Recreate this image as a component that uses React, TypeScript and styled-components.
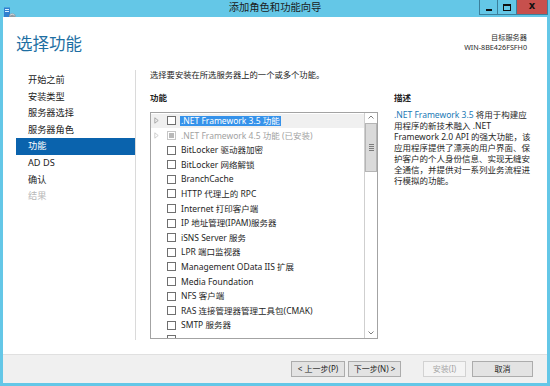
import React from 'react';
import styled, { createGlobalStyle } from 'styled-components';

const FONT = `"Noto Sans", "Noto Sans CJK SC", sans-serif`;

type NavState = 'normal' | 'current' | 'disabled';
type BoxState = 'empty' | 'installed';

interface Feature {
  label: string;
  expandable?: boolean;
  selected?: boolean;
  installed?: boolean;
}

const NAV_ITEMS: { label: string; state: NavState }[] = [
  { label: '开始之前', state: 'normal' },
  { label: '安装类型', state: 'normal' },
  { label: '服务器选择', state: 'normal' },
  { label: '服务器角色', state: 'normal' },
  { label: '功能', state: 'current' },
  { label: 'AD DS', state: 'normal' },
  { label: '确认', state: 'normal' },
  { label: '结果', state: 'disabled' },
];

// the last entry is the row cut off by the bottom of the list, only its box shows
const FEATURES: Feature[] = [
  { label: '.NET Framework 3.5 功能', expandable: true, selected: true },
  { label: '.NET Framework 4.5 功能 (已安装)', expandable: true, installed: true },
  { label: 'BitLocker 驱动器加密' },
  { label: 'BitLocker 网络解锁' },
  { label: 'BranchCache' },
  { label: 'HTTP 代理上的 RPC' },
  { label: 'Internet 打印客户端' },
  { label: 'IP 地址管理(IPAM)服务器' },
  { label: 'iSNS Server 服务' },
  { label: 'LPR 端口监视器' },
  { label: 'Management OData IIS 扩展' },
  { label: 'Media Foundation' },
  { label: 'NFS 客户端' },
  { label: 'RAS 连接管理器管理工具包(CMAK)' },
  { label: 'SMTP 服务器' },
  { label: '' },
];

const DESC_LINES = [
  '用程序的新技术融入 .NET',
  'Framework 2.0 API 的强大功能，该',
  '应用程序提供了漂亮的用户界面、保',
  '护客户的个人身份信息、实现无缝安',
  '全通信，并提供对一系列业务流程进',
  '行模拟的功能。',
];

const AppIcon = () => (
  <svg width="13" height="12" viewBox="0 0 13 12">
    <rect x="1" y="0.5" width="6" height="10" fill="#2f7fcf" />
    <rect x="2" y="2" width="4" height="1" fill="#d8ecff" />
    <rect x="2" y="4" width="4" height="1" fill="#d8ecff" />
    <path d="M6 11 L6 8 Q9 4.5 12.5 8 L12.5 11 Z" fill="#8e9aa3" />
    <path d="M7 8.2 Q9 6 11.5 8.2" stroke="#e6eaee" strokeWidth="0.8" fill="none" />
  </svg>
);

const Expander = ({ faded }: { faded?: boolean }) => (
  <svg width="5" height="7" viewBox="0 0 5 7">
    <path d="M0.8 0.8 L4.2 3.5 L0.8 6.2 Z" fill="none" stroke={faded ? '#c4c4c4' : '#9a9a9a'} strokeWidth="0.8" />
  </svg>
);

const Chevron = ({ up }: { up?: boolean }) => (
  <svg width="6" height="4" viewBox="0 0 6 4">
    <path d={up ? 'M0.5 3.5 L3 1 L5.5 3.5' : 'M0.5 0.5 L3 3 L5.5 0.5'} fill="none" stroke="#707070" strokeWidth="0.9" />
  </svg>
);

const Grip = () => (
  <svg width="5" height="7" viewBox="0 0 5 7">
    {[0, 2, 4, 6].map((y) => (
      <rect key={y} x="0" y={y} width="5" height="1" fill="#7c7c7c" />
    ))}
  </svg>
);

const App = () => {
  return (
    <>
      <GlobalStyle />
      <Window>
        <TitleBar>
          <IconSlot>
            <AppIcon />
          </IconSlot>
          <TitleText>添加角色和功能向导</TitleText>
          <WindowControls>
            <CaptionButton $kind="min">
              <MinGlyph />
            </CaptionButton>
            <CaptionButton $kind="max">
              <MaxGlyph />
            </CaptionButton>
            <CaptionButton $kind="close">
              <CloseGlyph>x</CloseGlyph>
            </CaptionButton>
          </WindowControls>
        </TitleBar>

        <Client>
          <Header>
            <PageTitle>选择功能</PageTitle>
            <ServerInfo>
              <div>目标服务器</div>
              <div>WIN-8BE426FSFH0</div>
            </ServerInfo>
          </Header>

          <Body>
            <Nav>
              {NAV_ITEMS.map((item) => (
                <NavItem key={item.label} $state={item.state}>
                  {item.label}
                </NavItem>
              ))}
            </Nav>

            <Main>
              <Instruction>选择要安装在所选服务器上的一个或多个功能。</Instruction>
              <SectionLabel>功能</SectionLabel>
              <SectionLabel>描述</SectionLabel>

              <ListBox>
                <Rows>
                  {FEATURES.map((f, i) => (
                    <FeatureRow key={i} $focused={i === 0}>
                      <ExpanderSlot>{f.expandable && <Expander faded={f.installed} />}</ExpanderSlot>
                      <CheckBox $state={f.installed ? 'installed' : 'empty'} />
                      {f.label && (
                        <FeatureLabel $selected={!!f.selected} $muted={!!f.installed}>
                          {f.label}
                        </FeatureLabel>
                      )}
                    </FeatureRow>
                  ))}
                </Rows>
                <ScrollBar>
                  <ArrowButton>
                    <Chevron up />
                  </ArrowButton>
                  <Thumb>
                    <Grip />
                  </Thumb>
                  <Track />
                  <ArrowButton>
                    <Chevron />
                  </ArrowButton>
                </ScrollBar>
              </ListBox>

              <Description>
                <DescLine>
                  <DescLink>.NET Framework 3.5</DescLink> 将用于构建应
                </DescLine>
                {DESC_LINES.map((line) => (
                  <DescLine key={line}>{line}</DescLine>
                ))}
              </Description>
            </Main>
          </Body>

          <Footer>
            <WizardButton $width={54}>&lt; 上一步(P)</WizardButton>
            <WizardButton $width={53} $spaceBefore={3}>
              下一步(N) &gt;
            </WizardButton>
            <WizardButton $width={43} $spaceBefore={22} disabled>
              安装(I)
            </WizardButton>
            <WizardButton $width={61} $spaceBefore={6}>
              取消
            </WizardButton>
          </Footer>
        </Client>
      </Window>
    </>
  );
};

const GlobalStyle = createGlobalStyle`
  html, body {
    margin: 0;
    padding: 0;
  }

  body {
    background: #ffffff;
    font-family: ${FONT};
    overflow: hidden;
  }
`;

const Window = styled.div`
  background: #64c7e7;
  box-sizing: border-box;
  display: flex;
  flex-direction: column;
  height: 386px;
  width: 550px;
`;

const TitleBar = styled.div`
  align-items: start;
  display: grid;
  grid-template-columns: 1fr auto 1fr;
  height: 17px;
`;

const IconSlot = styled.div`
  padding: 2px 0 0 3px;
`;

const TitleText = styled.div`
  color: #1b1b1b;
  font-size: 10.3px;
  line-height: 15px;
`;

const WindowControls = styled.div`
  display: flex;
  justify-self: end;
  margin-right: 2px;
`;

const CaptionButton = styled.div<{ $kind: 'min' | 'max' | 'close' }>`
  align-items: center;
  background: ${({ $kind }) => ($kind === 'close' ? '#c7504d' : 'transparent')};
  border: 1px solid #3b7f9b;
  border-top: none;
  box-sizing: border-box;
  display: flex;
  height: 15px;
  justify-content: center;
  margin-left: -1px;
  width: ${({ $kind }) => ($kind === 'close' ? 32 : $kind === 'max' ? 20 : 19)}px;
`;

const MinGlyph = styled.div`
  background: #111;
  height: 2px;
  margin-top: 5px;
  width: 6px;
`;

const MaxGlyph = styled.div`
  border: 1px solid #111;
  border-top-width: 2px;
  height: 4px;
  width: 6px;
`;

const CloseGlyph = styled.span`
  color: #111;
  font-family: "DejaVu Sans", sans-serif;
  font-size: 10px;
  font-weight: bold;
  line-height: 10px;
  margin-top: -2px;
`;

const Client = styled.div`
  background: #ffffff;
  display: flex;
  flex: 1;
  flex-direction: column;
  margin: 0 3px 3px;
  min-height: 0;
`;

const Header = styled.div`
  display: flex;
  height: 53px;
  justify-content: space-between;
  padding: 0 20px 0 13px;
`;

const PageTitle = styled.div`
  color: #1e6fa3;
  font-size: 16.5px;
  line-height: 20px;
  padding-top: 17px;
`;

const ServerInfo = styled.div`
  color: #2a2a2a;
  font-size: 7.2px;
  line-height: 10px;
  padding-top: 15px;
  text-align: right;
`;

const Body = styled.div`
  display: flex;
  flex: 1;
  min-height: 0;
`;

const Nav = styled.div`
  border-right: 1px solid #dadada;
  box-sizing: border-box;
  display: flex;
  flex-direction: column;
  margin-bottom: 14px;
  padding: 2px 0 0 13px;
  width: 133px;
`;

const NavItem = styled.div<{ $state: NavState }>`
  background: ${({ $state }) => ($state === 'current' ? '#0a63ad' : 'transparent')};
  color: ${({ $state }) => ($state === 'current' ? '#ffffff' : $state === 'disabled' ? '#b8b8b8' : '#222222')};
  font-size: 9.2px;
  height: 16.6px;
  line-height: 16.6px;
  padding-left: 12px;
`;

const Main = styled.div`
  align-items: start;
  column-gap: 16px;
  display: grid;
  grid-template-columns: 228px 1fr;
  grid-template-rows: auto auto 1fr;
  padding-left: 14px;
`;

const Instruction = styled.div`
  color: #222222;
  font-size: 8.3px;
  grid-column: 1 / -1;
  line-height: 10px;
`;

const SectionLabel = styled.div`
  color: #222222;
  font-size: 8.5px;
  font-weight: 600;
  line-height: 10px;
  margin-top: 12.7px;
`;

const ListBox = styled.div`
  border: 1px solid #a3a3a3;
  box-sizing: border-box;
  display: flex;
  height: 227px;
  margin-top: 9.3px;
`;

const Rows = styled.div`
  flex: 1;
  overflow: hidden;
  padding-top: 0.7px;
`;

const FeatureRow = styled.div<{ $focused: boolean }>`
  align-items: center;
  background: ${({ $focused }) => ($focused ? '#f0f0f0' : 'transparent')};
  display: flex;
  height: 14.6px;
  padding-left: 3px;
`;

const ExpanderSlot = styled.div`
  display: flex;
  width: 13px;
`;

const CheckBox = styled.div<{ $state: BoxState }>`
  align-items: center;
  background: #ffffff;
  border: 1px solid ${({ $state }) => ($state === 'installed' ? '#c6c6c6' : '#6f6f6f')};
  box-sizing: border-box;
  display: flex;
  flex-shrink: 0;
  height: 9px;
  justify-content: center;
  width: 9px;

  &::after {
    background: #b9b9b9;
    content: '';
    display: ${({ $state }) => ($state === 'installed' ? 'block' : 'none')};
    height: 5px;
    width: 5px;
  }
`;

const FeatureLabel = styled.span<{ $selected: boolean; $muted: boolean }>`
  background: ${({ $selected }) => ($selected ? '#3592ea' : 'transparent')};
  color: ${({ $selected, $muted }) => ($selected ? '#ffffff' : $muted ? '#a2a2a2' : '#1e1e1e')};
  font-size: 8.5px;
  line-height: 10px;
  margin-left: 4px;
  padding: 0 1px;
  white-space: nowrap;
`;

const ScrollBar = styled.div`
  border-left: 1px solid #cfcfcf;
  display: flex;
  flex-direction: column;
  flex-shrink: 0;
  width: 12px;
`;

const ArrowButton = styled.div`
  align-items: center;
  display: flex;
  height: 9px;
  justify-content: center;
`;

const Thumb = styled.div`
  align-items: center;
  background: #dadada;
  border: 1px solid #b5b5b5;
  box-sizing: border-box;
  display: flex;
  height: 49px;
  justify-content: center;
  margin: 1px 0 0;
`;

const Track = styled.div`
  flex: 1;
`;

const Description = styled.div`
  color: #262626;
  font-size: 8.5px;
  line-height: 11px;
  margin-top: 6.8px;
`;

const DescLine = styled.div`
  white-space: nowrap;
`;

const DescLink = styled.span`
  color: #1a78b5;
`;

const Footer = styled.div`
  align-items: flex-start;
  background: #f0f0f0;
  border-top: 1px solid #e0e0e0;
  box-sizing: border-box;
  display: flex;
  height: 29px;
  justify-content: flex-end;
  padding: 6px 14px 0 0;
`;

const WizardButton = styled.button<{ $width: number; $spaceBefore?: number }>`
  background: ${({ disabled }) => (disabled ? '#f4f4f4' : '#e3e3e3')};
  border: 1px solid ${({ disabled }) => (disabled ? '#d2d2d2' : '#acacac')};
  box-sizing: border-box;
  color: ${({ disabled }) => (disabled ? '#a6a6a6' : '#1e1e1e')};
  font-family: ${FONT};
  font-size: 8px;
  height: 16px;
  line-height: 14px;
  margin-left: ${({ $spaceBefore = 0 }) => $spaceBefore}px;
  padding: 0;
  width: ${({ $width }) => $width}px;
`;

export default App;
